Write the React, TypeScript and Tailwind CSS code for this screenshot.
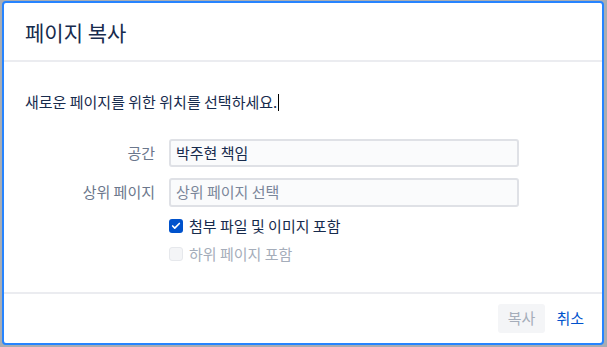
import { Check } from 'lucide-react';

const font = { fontFamily: '"Noto Sans CJK KR", "Noto Sans", sans-serif' };

export default function App() {
  return (
    <div className="w-[607px] h-[347px] bg-[#a9adb3] pt-px pl-[2px] overflow-hidden" style={font}>
      <div className="w-[602px] h-[344px] bg-white border-2 border-[#2684ff] rounded-[4px] flex flex-col">
        {/* header */}
        <div className="h-[59px] flex items-center pl-[21px] border-b-2 border-[#ebecf0]">
          <h1 className="text-[21px] leading-6 text-[#172b4d] font-normal">페이지 복사</h1>
        </div>

        {/* body */}
        <div className="flex-1 pt-[30px] pl-[21px] border-b-2 border-[#ebecf0]">
          <p className="h-5 text-[15px] leading-5 text-[#172b4d] flex items-center">
            새로운 페이지를 위한 위치를 선택하세요.
            <span className="inline-block w-px h-[17px] bg-black ml-px" />
          </p>

          <div className="mt-[27px] grid grid-cols-[130px_350px] gap-x-[14px] gap-y-[11px] items-center">
            <label className="text-right text-[15px] text-[#6b778c]">공간</label>
            <div className="h-[28px] bg-[#fafbfc] border-2 border-[#dfe1e6] rounded-[3px] flex items-center px-[5px] text-[15px] text-[#172b4d]">
              박주현 책임
            </div>
            <label className="text-right text-[15px] text-[#6b778c]">상위 페이지</label>
            <div className="h-[29px] bg-[#fafbfc] border-2 border-[#dfe1e6] rounded-[3px] flex items-center px-[5px] text-[15px] text-[#7a869a]">
              상위 페이지 선택
            </div>
          </div>

          <div className="mt-[5px] ml-[144px] flex flex-col">
            <div className="h-7 flex items-center gap-[6px]">
              <span className="w-[14px] h-[14px] rounded-[3px] bg-[#0052cc] flex items-center justify-center">
                <Check size={10} strokeWidth={4} className="text-white" />
              </span>
              <span className="text-[15px] text-[#172b4d]">첨부 파일 및 이미지 포함</span>
            </div>
            <div className="h-7 flex items-center gap-[6px]">
              <span className="w-[14px] h-[14px] rounded-[3px] bg-[#f4f5f7] border border-[#e6e8ec]" />
              <span className="text-[15px] text-[#a5adba]">하위 페이지 포함</span>
            </div>
          </div>
        </div>

        {/* footer */}
        <div className="h-[49px] flex items-center justify-end pr-[7px]">
          <button className="h-[29px] px-[10px] rounded-[3px] bg-[#f4f5f7] text-[15px] text-[#a5adba]" disabled>
            복사
          </button>
          <button className="h-[29px] px-[11px] text-[15px] text-[#0052cc]">취소</button>
        </div>
      </div>
    </div>
  );
}
